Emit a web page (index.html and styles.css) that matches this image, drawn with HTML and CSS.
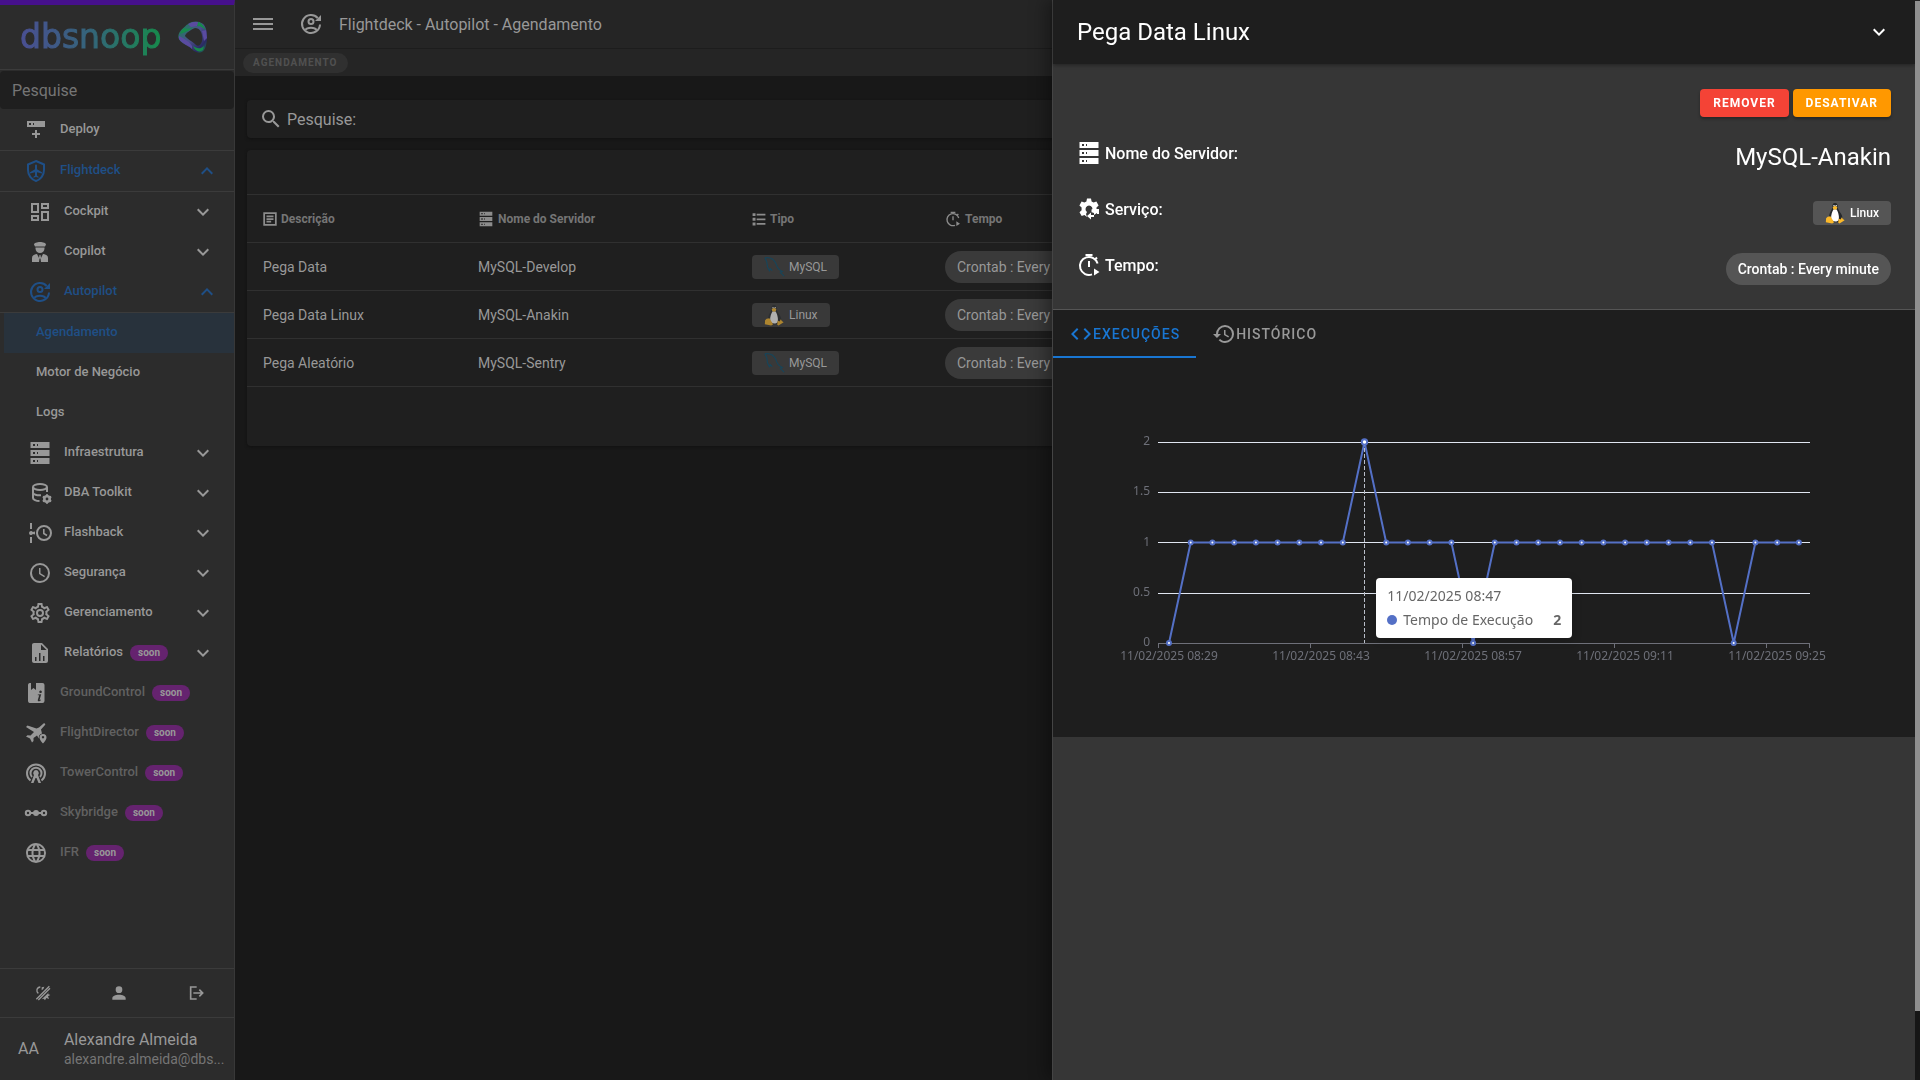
FILE: index.html
```html
<!DOCTYPE html>
<html lang="pt-BR">
<head>
    <meta charset="UTF-8">
    <meta name="viewport" content="width=device-width, initial-scale=1.0">
    <title>Flightdeck - Autopilot - Agendamento</title>
    <link rel="stylesheet" href="styles.css">
</head>
<body>
    <!-- icon set -->
    <svg class="sprite" aria-hidden="true">
        <symbol id="menu" viewBox="0 0 24 24"><path d="M2,6H22V8H2V6M2,11H22V13H2V11M2,16H22V18H2V16Z"/></symbol>
        <symbol id="down" viewBox="0 0 24 24"><path d="M7.41,8.58L12,13.17L16.59,8.58L18,10L12,16L6,10L7.41,8.58Z"/></symbol>
        <symbol id="up" viewBox="0 0 24 24"><path d="M7.41,15.41L12,10.83L16.59,15.41L18,14L12,8L6,14L7.41,15.41Z"/></symbol>
        <symbol id="magnify" viewBox="0 0 24 24"><path d="M9.5,3A6.5,6.5 0 0,1 16,9.5C16,11.11 15.41,12.59 14.44,13.73L14.71,14H15.5L20.5,19L19,20.5L14,15.5V14.71L13.73,14.44C12.59,15.41 11.11,16 9.5,16A6.5,6.5 0 0,1 3,9.5A6.5,6.5 0 0,1 9.5,3M9.5,5C7,5 5,7 5,9.5C5,12 7,14 9.5,14C12,14 14,12 14,9.5C14,7 12,5 9.5,5Z"/></symbol>
        <symbol id="deploy" viewBox="0 0 24 24"><path fill-rule="evenodd" d="M3,3H21V9H3V3M5,5V7H7V5H5M9,5V7H10V5H9M11,12H13V15H16V17H13V20H11V17H8V15H11V12Z"/></symbol>
        <symbol id="shield" viewBox="0 0 24 24"><path fill="none" stroke="currentColor" stroke-width="2" d="M12,2L20,5.5V11C20,16.2 16.6,20.6 12,22C7.400,20.6 4,16.200 4,11V5.500Z"/><path d="M12,5.500C12.600,5.500 13,6 13,6.600V10.200L18,13.200V14.600L13,13.200V16.600L14.600,17.800V18.800L12,18.100L9.400,18.800V17.800L11,16.600V13.200L6,14.600V13.200L11,10.200V6.600C11,6 11.400,5.500 12,5.500Z"/></symbol>
        <symbol id="dashboard" viewBox="0 0 24 24"><path d="M19,5V7H15V5H19M9,5V11H5V5H9M19,13V19H15V13H19M9,17V19H5V17H9M21,3H13V9H21V3M11,3H3V13H11V3M21,11H13V21H21V11M11,15H3V21H11V15Z"/></symbol>
        <symbol id="pilot" viewBox="0 0 24 24"><path d="M6,4.500C6,3 9,2 12,2C15,2 18,3 18,4.500L17,6.500H7L6,4.500M7.500,7.500H16.500V8.500C16.500,11 14.500,13 12,13C9.500,13 7.500,11 7.500,8.500V7.500M4,22V18C4,15.500 6,14.300 9,14L11,18L11.500,15H12.500L13,18L15,14C18,14.300 20,15.500 20,18V22H13L12.500,18.500H11.500L11,22H4Z"/></symbol>
        <symbol id="autopilot" viewBox="0 0 24 24"><g fill="none" stroke="currentColor" stroke-width="2"><path d="M18.700,6A9,9 0 1,0 21,12.500"/><circle cx="12" cy="9.500" r="2.500"/><path d="M6.500,18C8,15 16,15 17.500,18"/></g><path d="M22,3V9H16L22,3Z"/></symbol>
        <symbol id="server" viewBox="0 0 24 24"><path fill-rule="evenodd" d="M2.500,1H21.500V7H2.500V1M5,3V5H7V3H5M9,3V5H10V3H9M2.500,9H21.500V15H2.500V9M5,11V13H7V11H5M9,11V13H10V11H9M2.500,17H21.500V23H2.500V17M5,19V21H7V19H5M9,19V21H10V19H9Z"/></symbol>
        <symbol id="database" viewBox="0 0 24 24"><g fill="none" stroke="currentColor" stroke-width="2"><ellipse cx="12" cy="6" rx="7" ry="3"/><path d="M5,6V17C5,18.500 8,20 11.500,20M19,6V11M5,11.500C5,13.500 9,14.500 13,14.200"/></g><circle cx="19" cy="18" r="2.700" fill="none" stroke="currentColor" stroke-width="2.600"/><path fill="none" stroke="currentColor" stroke-width="2" d="M19,13.200V15M19,21V22.800M14.800,15.600L16.500,16.500M21.500,19.500L23.200,20.400M14.800,20.400L16.500,19.500M21.500,16.500L23.200,15.600"/></symbol>
        <symbol id="timeline" viewBox="0 0 24 24"><path d="M2,2H4V8H2V2M2,16H4V22H2V16M3,10A2,2 0 0,1 4.800,11.100L7,10.500V13.500L4.800,12.900A2,2 0 1,1 3,10Z"/><circle cx="16" cy="12" r="7" fill="none" stroke="currentColor" stroke-width="2"/><path fill="none" stroke="currentColor" stroke-width="1.600" d="M15.800,8V12.500L19,14.500"/></symbol>
        <symbol id="clock" viewBox="0 0 24 24"><path d="M12,20A8,8 0 0,0 20,12A8,8 0 0,0 12,4A8,8 0 0,0 4,12A8,8 0 0,0 12,20M12,2A10,10 0 0,1 22,12A10,10 0 0,1 12,22C6.470,22 2,17.500 2,12A10,10 0 0,1 12,2M12.500,7V12.250L17,14.920L16.250,16.150L11,13V7H12.500Z"/></symbol>
        <symbol id="cog" viewBox="0 0 24 24"><path d="M12,8A4,4 0 0,1 16,12A4,4 0 0,1 12,16A4,4 0 0,1 8,12A4,4 0 0,1 12,8M12,10A2,2 0 0,0 10,12A2,2 0 0,0 12,14A2,2 0 0,0 14,12A2,2 0 0,0 12,10M10,22C9.75,22 9.54,21.82 9.5,21.58L9.13,18.93C8.5,18.68 7.96,18.34 7.44,17.94L4.95,18.95C4.73,19.03 4.46,18.95 4.34,18.73L2.34,15.27C2.21,15.05 2.27,14.78 2.46,14.63L4.57,12.97L4.5,12L4.57,11L2.46,9.37C2.27,9.22 2.21,8.95 2.34,8.73L4.34,5.27C4.46,5.05 4.73,4.96 4.95,5.05L7.44,6.05C7.96,5.66 8.5,5.32 9.13,5.07L9.5,2.42C9.54,2.18 9.75,2 10,2H14C14.25,2 14.46,2.18 14.5,2.42L14.87,5.07C15.5,5.32 16.04,5.66 16.56,6.05L19.05,5.05C19.27,4.96 19.54,5.05 19.66,5.27L21.66,8.73C21.79,8.95 21.73,9.22 21.54,9.37L19.43,11L19.5,12L19.43,13L21.54,14.63C21.73,14.78 21.79,15.05 21.66,15.27L19.66,18.73C19.54,18.95 19.27,19.04 19.05,18.95L16.56,17.95C16.04,18.34 15.5,18.68 14.87,18.93L14.5,21.58C14.46,21.82 14.25,22 14,22H10M11.25,4L10.88,6.61C9.68,6.86 8.62,7.5 7.85,8.39L5.44,7.35L4.69,8.65L6.8,10.2C6.4,11.37 6.4,12.64 6.8,13.8L4.68,15.36L5.43,16.66L7.86,15.62C8.63,16.5 9.68,17.14 10.87,17.38L11.24,20H12.76L13.13,17.39C14.32,17.14 15.37,16.5 16.14,15.62L18.57,16.66L19.32,15.36L17.2,13.81C17.6,12.64 17.6,11.37 17.2,10.2L19.31,8.65L18.56,7.35L16.15,8.39C15.38,7.5 14.32,6.86 13.12,6.62L12.75,4H11.25Z"/></symbol>
        <symbol id="service" viewBox="0 0 24 24"><path fill-rule="evenodd" d="M10,1.500H14L14.600,4.500L16.600,5.600L19.400,4.600L21.600,8.400L19.500,10.400V12H22V15H14.500V12.500L15.500,12A3.500,3.500 0 1,0 10,15L9,17L10,20L7.400,18L4.700,19L2.500,15.300L4.600,13.300V10.500L2.400,8.400L4.600,4.600L7.400,5.500L9.400,4.500L10,1.500Z"/><path d="M17,11L20,14V12H22V17H20V16L17,18V16H14V18H17V20H14V22.500L10,19L14,15.500V16L17,15V11Z"/></symbol>
        <symbol id="report" viewBox="0 0 24 24"><path d="M13,9H18.500L13,3.500V9M6,2H14L20,8V20A2,2 0 0,1 18,22H6C4.890,22 4,21.100 4,20V4C4,2.890 4.890,2 6,2M7,20H8.500V16H7V20M11,20H12.500V12H11V20M15,20H16.500V15H15V20Z"/></symbol>
        <symbol id="ground" viewBox="0 0 24 24"><path fill-rule="evenodd" d="M5.500,2H7V9L9.500,7L12,9V2H18.500A2,2 0 0,1 20.500,4V20A2,2 0 0,1 18.500,22H5.500A2,2 0 0,1 4,20V4A2,2 0 0,1 5.500,2M16.500,9.500A1.300,1.300 0 1,0 16.600,9.500M13.800,13.500V14.300H15.200L13.800,19C13.600,20.300 14.600,20.700 16,20L17,19L16.500,18.500L15.500,19.200L17.200,13.200L13.800,13.500Z"/></symbol>
        <symbol id="flight" viewBox="0 0 24 24"><path d="M15,6.500L19.500,2.500C20.500,1.500 22,3 21,4L17,8.500L18,12.500C15.500,13 14.500,15 14.800,17.500L13,14.500L9.500,17V20L8,21.500L6,17.500L2,15.500L3.500,14.200L6.500,14.500L10,11L2,6L3.500,4.500L12.500,7.500L15,6.500Z"/><path fill-rule="evenodd" d="M19,13A3.500,3.500 0 0,1 22.500,16.500C22.500,19 19,22.500 19,22.500S15.500,19 15.500,16.500A3.500,3.500 0 0,1 19,13M19,15A1.200,1.200 0 1,0 19.010,15Z"/></symbol>
        <symbol id="tower" viewBox="0 0 24 24"><g fill="none" stroke="currentColor" stroke-width="2"><path d="M6.500,19.500A9,9 0 1,1 17.500,19.500M8,16A5.500,5.500 0 1,1 16,16"/></g><path d="M12,9A3,3 0 0,1 14,14L17,22H14.500L12.500,17H11.500L9.500,22H7L10,14A3,3 0 0,1 12,9Z"/></symbol>
        <symbol id="bridge" viewBox="0 0 24 24"><g fill="none" stroke="currentColor" stroke-width="2"><circle cx="4" cy="12" r="2.200"/><circle cx="20" cy="12" r="2.200"/><path d="M6,12H18"/></g><circle cx="12" cy="12" r="3"/></symbol>
        <symbol id="web" viewBox="0 0 24 24"><path d="M16.36,14C16.44,13.34 16.5,12.68 16.5,12C16.5,11.32 16.44,10.66 16.36,10H19.74C19.9,10.64 20,11.31 20,12C20,12.69 19.9,13.36 19.74,14M14.59,19.56C15.19,18.45 15.65,17.25 15.97,16H18.92C17.96,17.65 16.43,18.93 14.59,19.56M14.34,14H9.66C9.56,13.34 9.5,12.68 9.5,12C9.5,11.32 9.56,10.65 9.66,10H14.34C14.43,10.65 14.5,11.32 14.5,12C14.5,12.68 14.43,13.34 14.34,14M12,19.96C11.17,18.76 10.5,17.43 10.09,16H13.91C13.5,17.43 12.83,18.76 12,19.96M8,8H5.08C6.03,6.34 7.57,5.06 9.4,4.44C8.8,5.55 8.35,6.75 8,8M5.08,16H8C8.35,17.25 8.8,18.45 9.4,19.56C7.57,18.93 6.03,17.65 5.08,16M4.26,14C4.1,13.36 4,12.69 4,12C4,11.31 4.1,10.64 4.26,10H7.64C7.56,10.66 7.5,11.32 7.5,12C7.5,12.68 7.56,13.34 7.64,14M12,4.03C12.83,5.23 13.5,6.57 13.91,8H10.09C10.5,6.57 11.17,5.23 12,4.03M18.92,8H15.97C15.65,6.75 15.19,5.55 14.59,4.44C16.43,5.07 17.96,6.34 18.92,8M12,2C6.47,2 2,6.5 2,12A10,10 0 0,0 12,22A10,10 0 0,0 22,12A10,10 0 0,0 12,2Z"/></symbol>
        <symbol id="theme" viewBox="0 0 24 24"><path fill="none" stroke="currentColor" stroke-width="2" d="M8,3C2,3.500 1.500,10 5,12.500M2,21.500L21.500,2M5,22.500L22.500,5"/><path d="M10,3.500L14,2.500L12.500,6L10,8V3.500M21,11L19.500,13.500L23,15L19.500,17L21,21L17,19.500L15,23L13,20.500L10,21.500L21,11Z"/></symbol>
        <symbol id="account" viewBox="0 0 24 24"><path d="M12,4A4,4 0 0,1 16,8A4,4 0 0,1 12,12A4,4 0 0,1 8,8A4,4 0 0,1 12,4M12,14C16.42,14 20,15.79 20,18V20H4V18C4,15.79 7.58,14 12,14Z" transform="translate(-3 -3) scale(1.25)"/></symbol>
        <symbol id="exit" viewBox="0 0 24 24"><path fill="none" stroke="currentColor" stroke-width="2.500" d="M13,3H4V21H13M8,12H22M17,7L22,12L17,17"/></symbol>
        <symbol id="text" viewBox="0 0 24 24"><path fill="none" stroke="currentColor" stroke-width="3" d="M2,2H22V22H2ZM6,7.500H18M6,12H18M6,16.500H14"/></symbol>
        <symbol id="list" viewBox="0 0 24 24"><path d="M8,3H23V6H8V3M8,11H23V14H8V11M8,19H23V22H8V19M1,2H6V7H1V2M1,10H6V15H1V10M1,18H6V23H1V18Z"/></symbol>
        <symbol id="timer" viewBox="0 0 24 24"><path fill="none" stroke="currentColor" stroke-width="2" d="M15,21.400A9,9 0 1,1 20.600,10.500M8.500,2H15.500M18,6.500L20,4.500"/><path d="M11,8H13V14H11V8M17,15.500L22.500,19L17,22.500Z"/></symbol>
        <symbol id="code" viewBox="0 0 24 24"><path d="M14.6,16.6L19.2,12L14.6,7.4L16,6L22,12L16,18L14.6,16.6M9.4,16.6L4.8,12L9.4,7.4L8,6L2,12L8,18L9.4,16.6Z"/></symbol>
        <symbol id="history" viewBox="0 0 24 24"><path d="M13.5,8H12V13L16.28,15.54L17,14.33L13.5,12.25V8M13,3A9,9 0 0,0 4,12H1L4.96,16.03L9,12H6A7,7 0 0,1 13,5A7,7 0 0,1 20,12A7,7 0 0,1 13,19C11.07,19 9.32,18.21 8.06,16.94L6.64,18.36C8.27,20 10.5,21 13,21A9,9 0 0,0 22,12A9,9 0 0,0 13,3"/></symbol>
        <symbol id="dolphin" viewBox="0 0 24 24"><path fill="none" stroke="#17455a" stroke-width="1.300" d="M2,2C8,1 12,4 14,8C15,12 17,15 21,17L19,18L23,22M2,2L4,6L5,12L7,16L8,14L10,16"/></symbol>
        <symbol id="tux" viewBox="0 0 24 24"><path fill="#25282b" d="M12,1C9.500,1 9,3 9.200,6C8.500,9 5.500,12 5.500,17L9,22H16L20,18C20.500,13 15.500,10 15,6C15.200,3 14.500,1 12,1Z"/><path fill="#fff" d="M10.500,8C9,10 7.500,14 7.800,18C9,21.500 13.500,22.500 16,19.500C17,15 15,10 13.500,8Z"/><path fill="#fbb829" d="M9.500,5.500L12,4L14.500,5.500L14,7.500L12,8.500L10,7.500ZM4,16L7,15.500L11,22L9,23.500L2,22L2.300,17.800ZM16,18L18,19L19.500,16.500L20.500,18.500L22.500,20L17,23.500L15.500,22.500Z"/><path fill="#fff" d="M10.300,3.200H11.500V4.500H10.300ZM12.700,3.200H13.900V4.500H12.700Z"/></symbol>
    </svg>

    <aside class="sidebar">
        <div class="brand">
            <span class="brand-name">dbsnoop</span>
            <svg class="brand-mark" viewBox="0 0 30 32" aria-hidden="true">
                <defs>
                    <linearGradient id="ring" x1="0" y1="0" x2="1" y2="1">
                        <stop offset="0" stop-color="#14884c"/>
                        <stop offset="0.5" stop-color="#4a4f8c"/>
                        <stop offset="0.8" stop-color="#2b2a63"/>
                        <stop offset="1" stop-color="#14884c"/>
                    </linearGradient>
                </defs>
                <path fill="url(#ring)" fill-rule="evenodd" d="M14,1C20,-1 27,2 28,8C30,14 29,25 26,29C23,33 17,32 14,28C11,25 2,22 0.500,17C-0.500,12 4,8 7,5.500C9,3.500 11,2 14,1ZM17,7C12,9 7,13 7,15C8,17 15,21 18,24C20,26 23,24 24,20C25,14 23,7 17,7Z"/>
                <path fill="#178a4c" d="M6,7C9,8 12,8 15,6C12,10 7,11 2,13C3,10 4,8.500 6,7ZM20,1C24,2 27,6 28,10C26,7 23,5 19,5ZM15,25C18,27 22,29 26,25L25,29C21,32 17,30 15,25Z"/>
                <path fill="#5a4ba0" d="M1,15C5,17 11,20 14,25L14,28C11,24 4,23 1,18ZM24,10L28,9L29,17L26,20ZM10,3L15,1L20,1L19,5L13,6Z"/>
            </svg>
        </div>
        <input class="side-search" type="text" placeholder="Pesquise" aria-label="Pesquise">

        <nav class="menu">
            <a href="#" class="item ruled"><svg class="icon"><use href="#deploy"/></svg>Deploy</a>
            <a href="#" class="item ruled open"><svg class="icon"><use href="#shield"/></svg>Flightdeck<svg class="icon arrow"><use href="#up"/></svg></a>
            <a href="#" class="item sub"><svg class="icon"><use href="#dashboard"/></svg>Cockpit<svg class="icon arrow"><use href="#down"/></svg></a>
            <a href="#" class="item sub"><svg class="icon"><use href="#pilot"/></svg>Copilot<svg class="icon arrow"><use href="#down"/></svg></a>
            <a href="#" class="item sub ruled open"><svg class="icon"><use href="#autopilot"/></svg>Autopilot<svg class="icon arrow"><use href="#up"/></svg></a>
            <a href="#" class="item leaf active">Agendamento</a>
            <a href="#" class="item leaf">Motor de Negócio</a>
            <a href="#" class="item leaf">Logs</a>
            <a href="#" class="item sub"><svg class="icon"><use href="#server"/></svg>Infraestrutura<svg class="icon arrow"><use href="#down"/></svg></a>
            <a href="#" class="item sub"><svg class="icon"><use href="#database"/></svg>DBA Toolkit<svg class="icon arrow"><use href="#down"/></svg></a>
            <a href="#" class="item sub"><svg class="icon"><use href="#timeline"/></svg>Flashback<svg class="icon arrow"><use href="#down"/></svg></a>
            <a href="#" class="item sub"><svg class="icon"><use href="#clock"/></svg>Segurança<svg class="icon arrow"><use href="#down"/></svg></a>
            <a href="#" class="item sub"><svg class="icon"><use href="#cog"/></svg>Gerenciamento<svg class="icon arrow"><use href="#down"/></svg></a>
            <a href="#" class="item sub"><svg class="icon"><use href="#report"/></svg>Relatórios<span class="soon">soon</span><svg class="icon arrow"><use href="#down"/></svg></a>
            <a href="#" class="item"><svg class="icon"><use href="#ground"/></svg><span class="muted">GroundControl</span><span class="soon">soon</span></a>
            <a href="#" class="item"><svg class="icon"><use href="#flight"/></svg><span class="muted">FlightDirector</span><span class="soon">soon</span></a>
            <a href="#" class="item"><svg class="icon"><use href="#tower"/></svg><span class="muted">TowerControl</span><span class="soon">soon</span></a>
            <a href="#" class="item"><svg class="icon"><use href="#bridge"/></svg><span class="muted">Skybridge</span><span class="soon">soon</span></a>
            <a href="#" class="item"><svg class="icon"><use href="#web"/></svg><span class="muted">IFR</span><span class="soon">soon</span></a>
        </nav>

        <div class="side-actions">
            <button type="button" aria-label="Tema"><svg class="icon small"><use href="#theme"/></svg></button>
            <button type="button" aria-label="Conta"><svg class="icon small"><use href="#account"/></svg></button>
            <button type="button" aria-label="Sair"><svg class="icon small"><use href="#exit"/></svg></button>
        </div>
        <div class="user">
            <span class="initials">AA</span>
            <div class="user-info">
                <div class="user-name">Alexandre Almeida</div>
                <div class="user-mail">alexandre.almeida@dbs...</div>
            </div>
        </div>
    </aside>

    <main class="main">
        <header class="topbar">
            <button type="button" aria-label="Menu"><svg class="icon"><use href="#menu"/></svg></button>
            <svg class="icon"><use href="#autopilot"/></svg>
            <h1>Flightdeck - Autopilot - Agendamento</h1>
        </header>
        <div class="crumbs"><a href="#" class="crumb">AGENDAMENTO</a></div>

        <div class="content">
            <label class="search">
                <svg class="icon"><use href="#magnify"/></svg>
                <input type="text" placeholder="Pesquise:" aria-label="Pesquise">
            </label>
            <section class="card">
                <table>
                    <colgroup><col class="c-desc"><col class="c-server"><col class="c-type"><col></colgroup>
                    <thead>
                        <tr>
                            <th><span class="th"><svg class="icon tiny"><use href="#text"/></svg>Descrição</span></th>
                            <th><span class="th"><svg class="icon small"><use href="#server"/></svg>Nome do Servidor</span></th>
                            <th><span class="th"><svg class="icon tiny"><use href="#list"/></svg>Tipo</span></th>
                            <th><span class="th"><svg class="icon small"><use href="#timer"/></svg>Tempo</span></th>
                        </tr>
                    </thead>
                    <tbody>
                        <tr>
                            <td>Pega Data</td>
                            <td>MySQL-Develop</td>
                            <td><span class="tag"><svg class="logo"><use href="#dolphin"/></svg>MySQL</span></td>
                            <td><span class="pill">Crontab : Every minute</span></td>
                        </tr>
                        <tr>
                            <td>Pega Data Linux</td>
                            <td>MySQL-Anakin</td>
                            <td><span class="tag"><svg class="logo dim"><use href="#tux"/></svg>Linux</span></td>
                            <td><span class="pill">Crontab : Every minute</span></td>
                        </tr>
                        <tr>
                            <td>Pega Aleatório</td>
                            <td>MySQL-Sentry</td>
                            <td><span class="tag"><svg class="logo"><use href="#dolphin"/></svg>MySQL</span></td>
                            <td><span class="pill">Crontab : Every minute</span></td>
                        </tr>
                    </tbody>
                </table>
            </section>
        </div>
    </main>

    <aside class="drawer">
        <header class="drawer-head">
            <h2>Pega Data Linux</h2>
            <button type="button" aria-label="Fechar"><svg class="icon"><use href="#down"/></svg></button>
        </header>
        <div class="details">
            <div class="actions">
                <button type="button" class="btn red">REMOVER</button>
                <button type="button" class="btn orange">DESATIVAR</button>
            </div>
            <div class="row">
                <span class="row-label"><svg class="icon"><use href="#server"/></svg>Nome do Servidor:</span>
                <span class="row-value">MySQL-Anakin</span>
            </div>
            <div class="row">
                <span class="row-label"><svg class="icon"><use href="#service"/></svg>Serviço:</span>
                <span class="tag"><svg class="logo"><use href="#tux"/></svg>Linux</span>
            </div>
            <div class="row">
                <span class="row-label"><svg class="icon"><use href="#timer"/></svg>Tempo:</span>
                <span class="pill">Crontab : Every minute</span>
            </div>
        </div>
        <div class="tabs" role="tablist">
            <button type="button" role="tab" aria-selected="true" class="tab selected"><svg class="icon"><use href="#code"/></svg>EXECUÇÕES</button>
            <button type="button" role="tab" aria-selected="false" class="tab"><svg class="icon"><use href="#history"/></svg>HISTÓRICO</button>
        </div>
        <div class="chart">
            <svg class="plot" viewBox="0 0 862 379">
                <defs>
                    <marker id="dot" viewBox="0 0 8 8" refX="4" refY="4" markerWidth="8" markerHeight="8" markerUnits="userSpaceOnUse">
                        <circle cx="4" cy="4" r="2" fill="#fff" stroke="#5470c6" stroke-width="2"/>
                    </marker>
                </defs>
                <path class="grid" d="M105,84.500H757M105,134.500H757M105,184.500H757M105,235.500H757"/>
                <path class="axis" d="M105,285.500H757M105.500,285V290M257.500,285V290M409.500,285V290M561.500,285V290M713.500,285V290M756.500,285V290"/>
                <g class="y-labels">
                    <text x="97" y="87">2</text>
                    <text x="97" y="137">1.5</text>
                    <text x="97" y="188">1</text>
                    <text x="97" y="238">0.5</text>
                    <text x="97" y="288">0</text>
                </g>
                <g class="x-labels">
                    <text x="116" y="302">11/02/2025 08:29</text>
                    <text x="268" y="302">11/02/2025 08:43</text>
                    <text x="420" y="302">11/02/2025 08:57</text>
                    <text x="572" y="302">11/02/2025 09:11</text>
                    <text x="724" y="302">11/02/2025 09:25</text>
                </g>
                <polyline class="series" points="116,285 137.700,184.500 159.400,184.500 181.200,184.500 202.900,184.500 224.600,184.500 246.300,184.500 268,184.500 289.800,184.500 311.500,84 333.200,184.500 354.900,184.500 376.600,184.500 398.400,184.500 420.100,285 441.800,184.500 463.500,184.500 485.200,184.500 507,184.500 528.700,184.500 550.400,184.500 572.100,184.500 593.800,184.500 615.600,184.500 637.300,184.500 659,184.500 680.700,285 702.400,184.500 724.200,184.500 745.900,184.500"/>
                <path class="pointer" d="M311.500,84V285"/>
                <circle cx="311.500" cy="84" r="2.700" fill="#fff" stroke="#5470c6" stroke-width="2"/>
            </svg>
            <div class="tooltip">
                <div>11/02/2025 08:47</div>
                <div class="tooltip-row"><i class="bullet"></i>Tempo de Execução<b>2</b></div>
            </div>
        </div>
    </aside>
    <div class="scrollbar"></div>
</body>
</html>
```
FILE: styles.css
```css
* {
    box-sizing: border-box;
}
body {
    margin: 0;
    display: flex;
    min-height: 100vh;
    overflow: hidden;
    background-color: #181818;
    color: #989898;
    font-family: Roboto, Arial, sans-serif;
    font-size: 14px;
}
button {
    background: none;
    border: none;
    padding: 0;
    color: inherit;
    font-family: inherit;
    cursor: pointer;
}
a {
    color: inherit;
    text-decoration: none;
}
h1, h2 {
    margin: 0;
}
.sprite {
    position: absolute;
    width: 0;
    height: 0;
}
.icon {
    display: block;
    flex: none;
    width: 24px;
    height: 24px;
    fill: currentColor;
}
.icon.small {
    width: 16px;
    height: 16px;
}
.icon.tiny {
    width: 14px;
    height: 14px;
}

/* sidebar */
.sidebar {
    display: flex;
    flex-direction: column;
    flex: none;
    width: 235px;
    height: 100vh;
    background-color: #2c2c2c;
    border-top: 5px solid #46108c;
    border-right: 1px solid #383838;
}
.brand {
    display: flex;
    align-items: center;
    justify-content: space-between;
    height: 65px;
    padding: 0 26px 0 20px;
    border-bottom: 1px solid #3b3b3b;
}
.brand-name {
    font-family: "DejaVu Sans", sans-serif;
    font-size: 33px;
    line-height: 40px;
    background: linear-gradient(90deg, #4a4f93, #34657a 50%, #178a4c);
    background-clip: text;
    -webkit-background-clip: text;
    -webkit-text-stroke: 1px transparent;
    color: transparent;
}
.brand-mark {
    width: 30px;
    height: 32px;
}
.side-search {
    height: 38px;
    margin: 1px 0;
    padding: 0 12px;
    border: none;
    border-radius: 4px;
    background-color: #1f1f1f;
    color: #989898;
    font-family: inherit;
    font-size: 16px;
}
.side-search::placeholder {
    color: #757575;
}
.menu {
    flex: 1;
}
.item {
    display: flex;
    align-items: center;
    height: 40px;
    padding: 0 19px 3px 24px;
    font-size: 13px;
    font-weight: 500;
}
.item .icon, .item .soon {
    margin-top: 3px;
}
.item .icon:first-child {
    margin-right: 12px;
}
.item.sub {
    padding-left: 28px;
}
.item.ruled {
    height: 41px;
    border-bottom: 1px solid #3b3b3b;
}
.item.open, .item.active {
    color: #1f4f86;
}
.item.open {
    padding-right: 15px;
}
.item.leaf {
    padding-left: 36px;
}
.item.active {
    margin-left: 4px;
    padding-left: 32px;
    background-color: #28323c;
}
.item .arrow {
    margin-left: auto;
}
.muted {
    color: #616161;
}
.soon {
    margin-left: 7px;
    padding: 0 8px;
    border-radius: 8px;
    background-color: #65236f;
    font-size: 10px;
    font-weight: 700;
    line-height: 16px;
}
.side-actions {
    display: grid;
    grid-template-columns: repeat(3, 1fr);
    justify-items: center;
    height: 50px;
    padding-left: 5px;
    border-top: 1px solid #3b3b3b;
    border-bottom: 1px solid #3b3b3b;
}
.user {
    display: flex;
    align-items: center;
    gap: 25px;
    height: 62px;
    padding: 0 10px 0 18px;
}
.initials, .user-name {
    font-size: 16px;
    line-height: 20px;
}
.user-mail {
    color: #757575;
    font-size: 14px;
    line-height: 18px;
}

/* main page */
.main {
    flex: 1;
    min-width: 0;
}
.topbar {
    display: flex;
    align-items: center;
    gap: 24px;
    height: 49px;
    padding: 0 16px;
    background-color: #252525;
    border-bottom: 1px solid #1d1d1d;
}
.topbar h1 {
    margin-left: -8px;
    font-size: 16px;
    font-weight: 400;
}
.crumbs {
    display: flex;
    align-items: center;
    height: 27px;
    padding: 0 8px;
    background-color: #252525;
}
.crumb {
    padding: 0 10px;
    border-radius: 10px;
    background-color: #303030;
    color: #505050;
    font-size: 10px;
    font-weight: 700;
    letter-spacing: 1px;
    line-height: 20px;
}
.content {
    display: flex;
    flex-direction: column;
    gap: 12px;
    padding: 24px 17px 24px 12px;
}
.search {
    display: flex;
    align-items: center;
    gap: 2px;
    height: 38px;
    padding: 0 12px;
    border-radius: 4px;
    background-color: #1f1f1f;
    box-shadow: 0 1px 3px #111;
}
.search input {
    flex: 1;
    border: none;
    background: none;
    font-family: inherit;
    font-size: 16px;
}
.search input::placeholder {
    color: #989898;
}
.card {
    padding: 44px 0 59px;
    border-radius: 4px;
    background-color: #1f1f1f;
    box-shadow: 0 1px 3px #111;
}
table {
    width: 100%;
    table-layout: fixed;
    border-collapse: collapse;
    border-top: 1px solid #303030;
}
.c-desc {
    width: 215px;
}
.c-server {
    width: 274px;
}
.c-type {
    width: 193px;
}
th, td {
    height: 48px;
    padding: 0 16px;
    border-bottom: 1px solid #303030;
    text-align: left;
}
th {
    color: #757575;
    font-size: 12px;
    font-weight: 700;
}
.th {
    display: flex;
    align-items: center;
    gap: 4px;
}
.th .icon {
    color: #8c8c8c;
}
.tag {
    display: inline-flex;
    align-items: center;
    gap: 4px;
    height: 24px;
    padding: 0 12px 0 11px;
    border-radius: 4px;
    background-color: #393939;
    font-size: 12px;
    vertical-align: middle;
}
.logo {
    width: 22px;
    height: 22px;
}
.logo.dim {
    opacity: 0.6;
}
.pill {
    display: inline-block;
    padding: 0 12px;
    border-radius: 16px;
    background-color: #3a3a3a;
    line-height: 32px;
}

/* details drawer */
.drawer {
    position: fixed;
    top: 0;
    right: 5px;
    bottom: 0;
    width: calc(45vw - 1px);
    border-left: 1px solid #444;
    background-color: #363636;
    box-shadow: -6px 0 16px rgba(0, 0, 0, 0.35);
    color: #fff;
}
.drawer-head {
    display: flex;
    align-items: center;
    justify-content: space-between;
    height: 64px;
    padding: 0 24px;
    background-color: #1e1e1e;
    box-shadow: 0 1px 4px rgba(0, 0, 0, 0.4);
}
.drawer-head h2 {
    font-size: 24px;
    font-weight: 400;
}
.details {
    padding: 25px 24px 0;
    height: 246px;
    border-bottom: 1px solid #555;
}
.actions {
    display: flex;
    justify-content: flex-end;
    gap: 4px;
    margin-bottom: 12px;
}
.btn {
    height: 28px;
    padding: 0 13px;
    border-radius: 4px;
    box-shadow: 0 2px 3px rgba(0, 0, 0, 0.3);
    font-size: 12px;
    font-weight: 700;
    letter-spacing: 1px;
}
.red {
    background-color: #f44336;
}
.orange {
    background-color: #ff9800;
}
.row {
    display: flex;
    align-items: center;
    justify-content: space-between;
    height: 56px;
}
.row-label {
    display: flex;
    align-items: center;
    gap: 4px;
    padding-bottom: 8px;
    font-size: 16px;
    font-weight: 500;
}
.row-value {
    font-size: 24px;
}
.drawer .tag, .drawer .pill {
    background-color: #555;
    font-weight: 500;
}
.tabs {
    display: flex;
    background-color: #1e1e1e;
}
.tab {
    display: flex;
    align-items: center;
    height: 48px;
    padding: 2px 16px 0;
    border-bottom: 2px solid transparent;
    color: #999;
    font-size: 14px;
    font-weight: 500;
    letter-spacing: 1px;
}
.selected {
    border-bottom-color: #1976d2;
    color: #1976d2;
}
.chart {
    position: relative;
    background-color: #1e1e1e;
    font-family: "Noto Sans", sans-serif;
}
.plot {
    display: block;
    width: 100%;
}
.grid {
    stroke: #e0e6f1;
}
.axis {
    stroke: #6e7079;
}
.grid, .axis {
    shape-rendering: crispEdges;
}
.plot text {
    fill: #6e7079;
    font-size: 12px;
}
.y-labels {
    text-anchor: end;
}
.x-labels {
    text-anchor: middle;
}
.series {
    fill: none;
    stroke: #5470c6;
    stroke-width: 2;
    stroke-linejoin: bevel;
    marker: url(#dot);
}
.pointer {
    stroke: #b9bec9;
    stroke-dasharray: 4 2;
}
.tooltip {
    position: absolute;
    left: 37.5%;
    top: 58%;
    padding: 6px 11px;
    border-radius: 4px;
    background-color: #fff;
    box-shadow: 1px 2px 10px rgba(0, 0, 0, 0.2);
    color: #666;
    font-size: 14px;
    line-height: 24px;
}
.tooltip-row {
    display: flex;
    align-items: center;
}
.tooltip-row b {
    margin-left: 20px;
}
.bullet {
    width: 10px;
    height: 10px;
    margin-right: 6px;
    border-radius: 5px;
    background-color: #5470c6;
}
.scrollbar {
    position: fixed;
    top: 1px;
    right: 0;
    width: 5px;
    height: 93.5vh;
    background-color: #8f8f8f;
}
```
